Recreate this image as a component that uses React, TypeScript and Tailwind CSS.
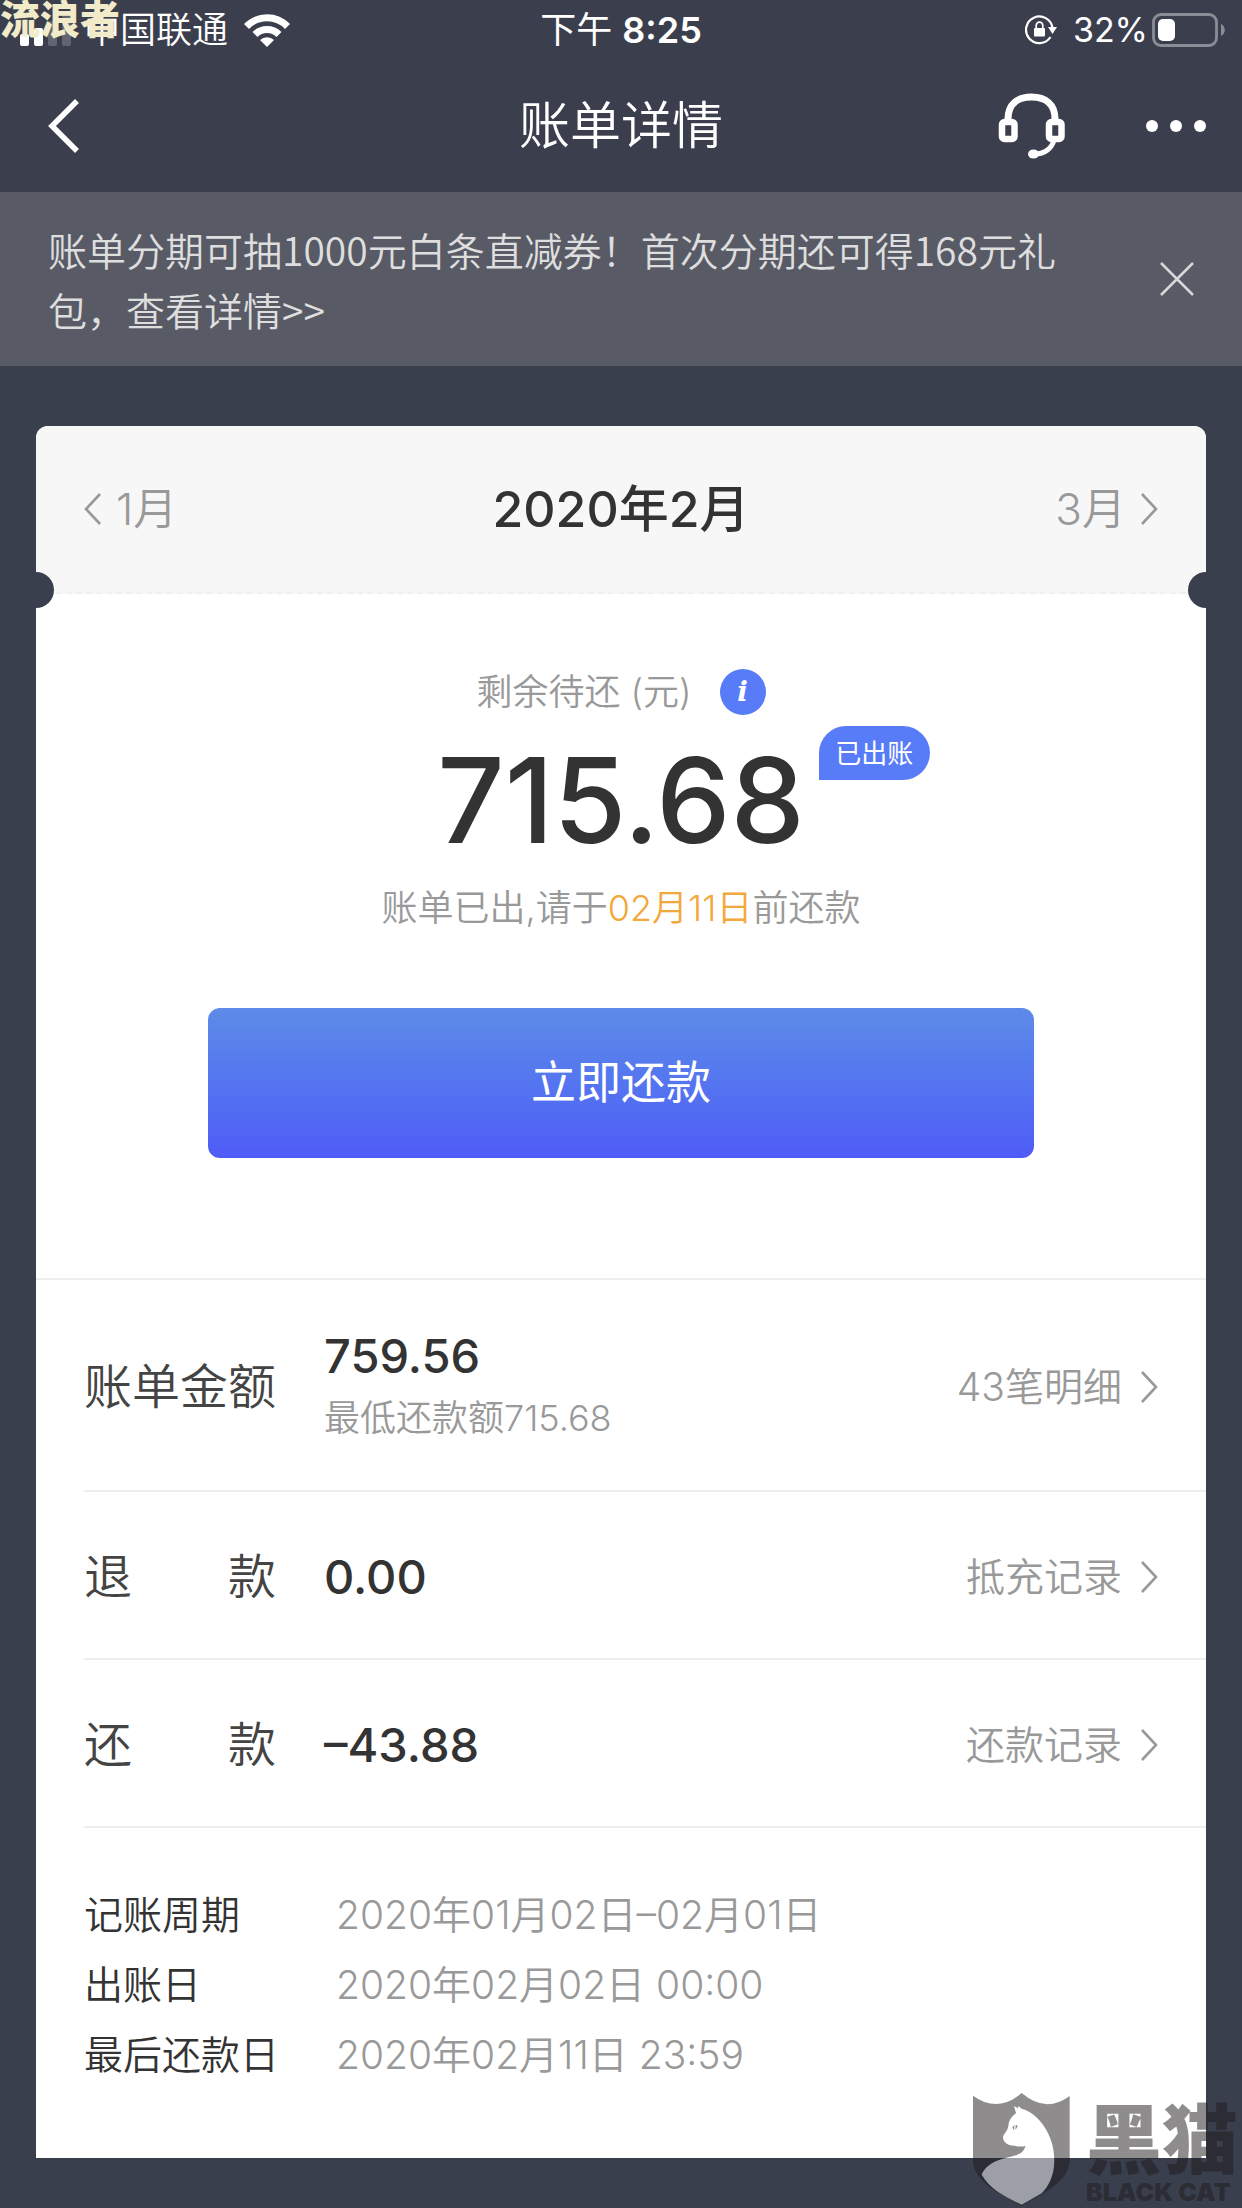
import type { ReactNode } from "react";

const rows = [
  { label: "账单金额", value: "759.56", note: "最低还款额715.68", link: "43笔明细" },
  { label: "退款", value: "0.00", link: "抵充记录" },
  { label: "还款", value: "–43.88", link: "还款记录" },
];

const dates = [
  { label: "记账周期", value: "2020年01月02日–02月01日" },
  { label: "出账日", value: "2020年02月02日 00:00" },
  { label: "最后还款日", value: "2020年02月11日 23:59" },
];

function Chevron({ left = false }: { left?: boolean }) {
  return (
    <svg className="h-8 w-[18px]" viewBox="0 0 18 32" fill="none" stroke="#999999" strokeWidth="2.6">
      <path d={left ? "M16 1 2 16l14 15" : "M2 1l14 15L2 31"} />
    </svg>
  );
}

function StatusBar() {
  return (
    <div className="grid h-[60px] grid-cols-[1fr_auto_1fr] items-center px-4 text-[36px] leading-[60px] font-[350]">
      <div className="flex items-center pl-1">
        <svg className="h-9 w-[52px]" viewBox="0 0 52 36" fill="#ffffff">
          <rect x="0" y="22" width="9" height="12" rx="2" />
          <rect x="14" y="16" width="9" height="18" rx="2" />
          <rect x="28" y="9" width="9" height="25" rx="2" opacity="0.2" />
          <rect x="42" y="2" width="9" height="32" rx="2" opacity="0.2" />
        </svg>
        <span className="ml-3">中国联通</span>
        <svg className="ml-4 h-[33px] w-[46px]" viewBox="0 0 46 33" fill="none" stroke="#ffffff" strokeWidth="7">
          <path d="M2.5 12.500A28.500 28.500 0 0 1 43.500 12.500" />
          <path d="M11 20.500A17 17 0 0 1 35 20.500" />
          <path d="M23 33l-7-7a10 10 0 0 1 14 0z" fill="#ffffff" stroke="none" />
        </svg>
      </div>
      <span className="font-normal">
        下午 <span className="font-semibold">8:25</span>
      </span>
      <div className="flex items-center justify-end">
        <svg className="h-8 w-8" viewBox="0 0 32 32" fill="none" stroke="#ffffff" strokeWidth="2.2">
          <path d="M27.500 14A13.300 13.300 0 1 0 25.500 23" />
          <path d="M23 13h9l-4.500 7z" fill="#ffffff" stroke="none" />
          <rect x="9" y="14" width="11" height="8.500" rx="1" fill="#ffffff" stroke="none" />
          <path d="M11.200 14v-2.500a3.300 3.300 0 0 1 6.600 0V14" strokeWidth="1.700" />
        </svg>
        <span className="ml-4 text-[34px] font-normal">32%</span>
        <svg className="ml-1 h-[34px] w-[74px]" viewBox="0 0 74 34" fill="none">
          <rect x="1.500" y="1.500" width="63" height="31" rx="7.500" stroke="#8b8d96" strokeWidth="2.800" />
          <rect x="6" y="6" width="17" height="22" rx="5" fill="#ffffff" />
          <path d="M69 11v12c5-2 5-10 0-12z" fill="#8b8d96" />
        </svg>
      </div>
    </div>
  );
}

function Header() {
  return (
    <header className="grid h-[132px] grid-cols-[1fr_auto_1fr] items-center px-9">
      <div className="flex pl-3">
        <button aria-label="返回">
          <svg className="h-[54px] w-8" viewBox="0 0 32 54" fill="none" stroke="#ffffff" strokeWidth="5.5">
            <path d="M29 2 4 27l25 25" />
          </svg>
        </button>
      </div>
      <h1 className="text-[51px] font-[350]">账单详情</h1>
      <div className="flex items-center justify-end gap-20">
        <button aria-label="客服">
          <svg className="h-[66px] w-[68px]" viewBox="0 0 68 66" fill="none" stroke="#ffffff" strokeWidth="6">
            <path d="M10 28v-2C10 11 20 4 33.500 4S57 11 57 26v2" strokeWidth="7" />
            <rect x="4" y="29" width="12.500" height="17" rx="2.500" strokeWidth="6.500" />
            <rect x="51" y="29" width="12.500" height="17" rx="2.500" strokeWidth="6.500" />
            <path d="M56 47c-2 8-9 14-19 14" strokeWidth="5" />
            <ellipse cx="35.500" cy="61" rx="5.500" ry="4.600" fill="#ffffff" stroke="none" />
          </svg>
        </button>
        <button aria-label="更多" className="flex gap-3">
          <span className="size-3 rounded-full bg-white" />
          <span className="size-3 rounded-full bg-white" />
          <span className="size-3 rounded-full bg-white" />
        </button>
      </div>
    </header>
  );
}

function Notice() {
  return (
    <div className="flex items-center justify-between bg-[#585b66] py-[27px] px-12">
      <a
        href="#notice"
        className="max-w-[1024px] font-['Noto_Sans_CJK_SC',sans-serif] text-[39px] leading-[60px] font-[350] text-[#dedede]"
      >
        账单分期可抽1000元白条直减券！首次分期还可得168元礼包，查看详情&gt;&gt;
      </a>
      <button aria-label="关闭">
        <svg className="size-[34px]" viewBox="0 0 34 34" stroke="#d8d8da" strokeWidth="2.500">
          <path d="M1 1l32 32M33 1 1 33" />
        </svg>
      </button>
    </div>
  );
}

function MonthLink({ children }: { children: ReactNode }) {
  return (
    <a href="#month" className="flex items-center gap-[14px] text-[44px] font-[350] text-[#999999]">
      {children}
    </a>
  );
}

function Summary() {
  return (
    <section className="flex flex-col items-center border-b-2 border-[#eeeeee] pt-[68px] pb-[120px]">
      <div className="flex items-center gap-7 text-[36px] leading-[60px] font-[350] text-[#999999]">
        <span>剩余待还 (元)</span>
        <button
          aria-label="说明"
          className="flex size-[46px] items-center justify-center rounded-full bg-[#587cf7] font-['DejaVu_Serif',serif] text-[28px] leading-none font-bold text-white italic"
        >
          i
        </button>
      </div>
      <div className="relative">
        <p className="text-[118px] leading-[156px] font-medium">715.68</p>
        <span className="absolute top-1 left-full ml-[14px] flex h-[54px] w-[111px] items-center justify-center rounded-[27px] rounded-bl-none bg-[#587cf7] text-[26px] text-white">
          已出账
        </span>
      </div>
      <p className="text-[36px] leading-[60px] font-[350] text-[#999999]">
        账单已出,请于<span className="text-[#f2a93b]">02月11日</span>前还款
      </p>
      <div className="w-full px-[172px] pt-[70px]">
        <button className="h-[150px] w-full rounded-xl bg-linear-to-b from-[#5d8be8] to-[#4f5bf7] text-[45px] text-white">
          立即还款
        </button>
      </div>
    </section>
  );
}

function Watermark() {
  return (
    <div className="pointer-events-none absolute right-0 bottom-0 flex items-end gap-[14px] text-[#1f1b1d] opacity-50">
      <svg className="h-[116px] w-[100px]" viewBox="97 96 300 348">
        <path
          d="M100 107q74 54 146-8q72 62 144 9v190c0 70-80 100-144 140C180 398 100 368 100 298z"
          fill="#1f1b1d"
        />
        <path
          d="M229 160l-6-22 12 7 1-7 10 8c52 14 98 80 98 154 0 50-20 82-38 100l-60 34c-50-24-92-44-120-90 20-50 92-50 116-64 8-5 12-12 16-22-14 4-30 0-46-2-14-4-22-14-22-24 2-12 14-18 16-34 2-20 12-30 23-38z"
          fill="#ffffff"
        />
        <path d="M218 202q4-8 16-6-2 14-13 13z" fill="#1f1b1d" />
        <path d="M227 197l-3 11" stroke="#ffffff" strokeWidth="4" />
      </svg>
      <div className="w-[156px]">
        <div className="text-[76px] leading-[72px] font-black">黑猫</div>
        <div className="text-[25px] leading-8 font-black whitespace-nowrap">BLACK CAT</div>
      </div>
    </div>
  );
}

export default function App() {
  return (
    <main className="relative min-h-screen overflow-hidden bg-[#393f4d] pb-12 font-['Inter','Noto_Sans_CJK_SC',sans-serif] text-[#333333]">
      <div className="bg-[#3b3e4d] text-white">
        <StatusBar />
        <Header />
      </div>
      <div className="absolute top-0 left-0 text-[40px] leading-10 font-black text-[#f1ebc9]">
        流浪者
      </div>
      <Notice />

      <div className="relative mx-9 mt-[60px] rounded-t-xl bg-white">
        <nav className="relative grid h-[168px] grid-cols-[1fr_auto_1fr] items-center rounded-t-xl border-b-2 border-dashed border-[#f0f0f0] bg-[#f7f7f7] px-12">
          <MonthLink>
            <Chevron left />
            1月
          </MonthLink>
          <h2 className="text-[50px] font-medium">2020年2月</h2>
          <div className="flex justify-end">
            <MonthLink>
              <span>3月</span>
              <Chevron />
            </MonthLink>
          </div>
          <span className="absolute -bottom-4 -left-[18px] size-9 rounded-full bg-[#393f4d]" />
          <span className="absolute -right-[18px] -bottom-4 size-9 rounded-full bg-[#393f4d]" />
        </nav>

        <Summary />

        {rows.map((row) => (
          <div
            key={row.label}
            className="ml-12 flex min-h-[168px] items-center border-b-2 border-[#eeeeee] pt-[45px] pr-12 pb-[41px]"
          >
            <div className="flex w-48 justify-between text-[48px] font-[350] text-[#444444]">
              {row.label.split("").map((char) => (
                <span key={char}>{char}</span>
              ))}
            </div>
            <div className="ml-12">
              <p className="text-[47px] leading-[62px] font-medium">{row.value}</p>
              {row.note && (
                <p className="text-[36px] leading-[62px] font-[350] text-[#999999]">{row.note}</p>
              )}
            </div>
            <a href="#detail" className="ml-auto flex items-center gap-[18px] text-[39px] font-[350] text-[#999999]">
              {row.link}
              <Chevron />
            </a>
          </div>
        ))}

        <dl className="grid grid-cols-[252px_1fr] pt-[52px] pb-[68px] pl-12 text-[39px] leading-[70px] font-[350]">
          {dates.map((item) => (
            <div key={item.label} className="contents">
              <dt>{item.label}</dt>
              <dd className="text-[#999999]">{item.value}</dd>
            </div>
          ))}
        </dl>
      </div>

      <Watermark />
    </main>
  );
}
